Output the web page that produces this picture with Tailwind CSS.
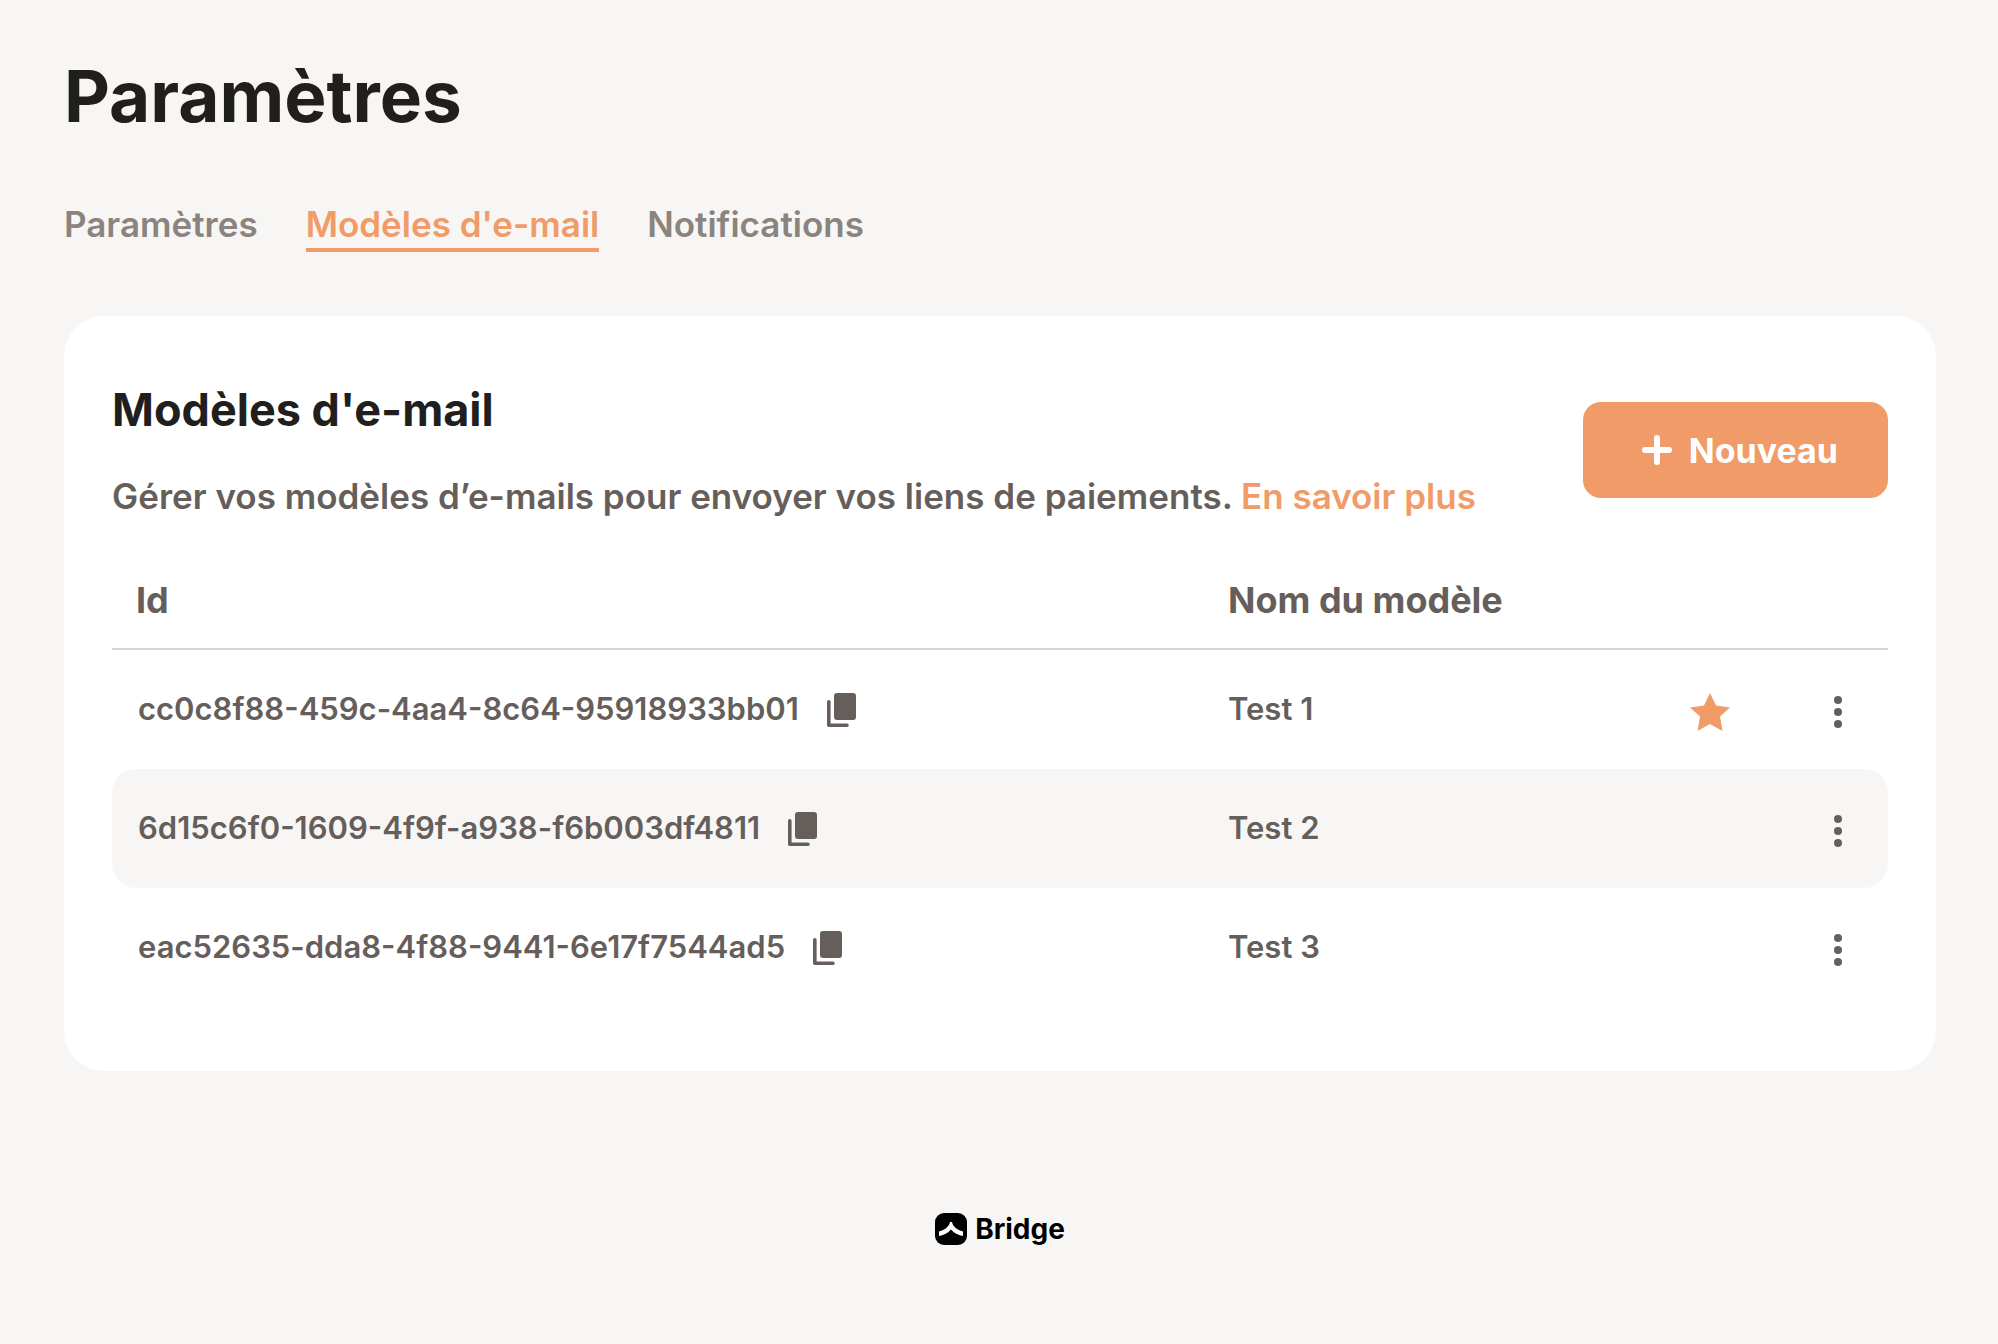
<!DOCTYPE html>
<html lang="fr">
<head>
    <meta charset="UTF-8">
    <meta name="viewport" content="width=device-width, initial-scale=1.0">
    <title>Paramètres - Bridge</title>
    <script src="https://cdn.jsdelivr.net/npm/@tailwindcss/browser@4"></script>
    <style>
        body {
            font-family: 'Inter', sans-serif;
        }
    </style>
</head>
<body class="min-h-screen bg-[#f7f6f5] text-[#665e5b] pl-16 pr-[62px] pt-12 pb-24">
    <!-- Shared icons -->
    <svg class="hidden">
        <symbol id="icon-copy" viewBox="0 0 29 34">
            <rect x="7" y="0" width="22" height="27" rx="3" fill="currentColor" />
            <path d="M1.800 8.800V32.200H20" fill="none" stroke="currentColor" stroke-width="3.600" stroke-linecap="round" stroke-linejoin="round" />
        </symbol>
        <symbol id="icon-more" viewBox="0 0 8 32">
            <circle cx="4" cy="4" r="4" fill="currentColor" />
            <circle cx="4" cy="16" r="4" fill="currentColor" />
            <circle cx="4" cy="28" r="4" fill="currentColor" />
        </symbol>
    </svg>

    <header>
        <h1 class="text-[71px] leading-24 font-bold text-[#211f1d]">Paramètres</h1>
        <nav class="mt-14 flex gap-12 text-[35px] leading-12 font-semibold text-[#8b837d]">
            <a href="#" class="border-b-4 border-transparent">Paramètres</a>
            <a href="#" class="border-b-4 border-[#f09b68] text-[#f09b68]" aria-current="page">Modèles d'e-mail</a>
            <a href="#" class="border-b-4 border-transparent">Notifications</a>
        </nav>
    </header>

    <main class="mt-16 rounded-[40px] bg-white px-12 py-16">
        <div class="flex items-center justify-between">
            <div>
                <h2 class="text-[45px] leading-[60px] font-bold text-[#211f1d]">Modèles d'e-mail</h2>
                <p class="mt-8 text-[35px] leading-12 font-semibold">Gérer vos modèles d’e-mails pour envoyer vos liens de paiements. <a href="#" class="text-[#f09b68]">En savoir plus</a></p>
            </div>
            <button type="button" class="flex h-24 items-center gap-4 rounded-[18px] bg-[#f09b68] pr-[50px] pl-[58px] text-[34px] font-bold text-white">
                <svg class="size-8" viewBox="0 0 32 32" fill="none" stroke="currentColor" stroke-width="6" stroke-linecap="round">
                    <path d="M16 4v24M4 16h24" />
                </svg>
                Nouveau
            </button>
        </div>

        <table class="mt-8 w-full table-fixed border-separate border-spacing-0 text-left text-[31px] font-semibold">
            <thead>
                <tr class="h-[98px] text-[36px]">
                    <th scope="col" class="border-b-2 border-[#d9d5d1] px-6 font-bold">Id</th>
                    <th scope="col" class="w-[430px] border-b-2 border-[#d9d5d1] px-6 font-bold">Nom du modèle</th>
                    <td class="w-[152px] border-b-2 border-[#d9d5d1]"></td>
                    <td class="w-[102px] border-b-2 border-[#d9d5d1]"></td>
                </tr>
            </thead>
            <tbody>
                <tr class="h-[119px]">
                    <td class="px-[26px]">
                        <div class="flex items-center gap-7">
                            cc0c8f88-459c-4aa4-8c64-95918933bb01
                            <button type="button" aria-label="Copier l'id"><svg class="h-[34px] w-[29px]"><use href="#icon-copy" /></svg></button>
                        </div>
                    </td>
                    <td class="px-6">Test 1</td>
                    <td class="pt-1">
                        <svg class="mx-auto size-10 text-[#f09b68]" viewBox="0 0 40 40" fill="currentColor" role="img" aria-label="Modèle par défaut">
                            <path d="M20 1l6 12.500L40 15.500l-10 9L32.500 39 20 32 7.500 39 10 24.500l-10-9L14 13.500z" />
                        </svg>
                    </td>
                    <td class="pt-1 pl-12"><button type="button" aria-label="Plus d'actions" class="block"><svg class="h-8 w-2"><use href="#icon-more" /></svg></button></td>
                </tr>
                <tr class="h-[119px]">
                    <td class="rounded-l-3xl bg-[#f7f6f5] px-[26px]">
                        <div class="flex items-center gap-7">
                            6d15c6f0-1609-4f9f-a938-f6b003df4811
                            <button type="button" aria-label="Copier l'id"><svg class="h-[34px] w-[29px]"><use href="#icon-copy" /></svg></button>
                        </div>
                    </td>
                    <td class="bg-[#f7f6f5] px-6">Test 2</td>
                    <td class="bg-[#f7f6f5]"></td>
                    <td class="rounded-r-3xl bg-[#f7f6f5] pt-1 pl-12"><button type="button" aria-label="Plus d'actions" class="block"><svg class="h-8 w-2"><use href="#icon-more" /></svg></button></td>
                </tr>
                <tr class="h-[119px]">
                    <td class="px-[26px]">
                        <div class="flex items-center gap-7">
                            eac52635-dda8-4f88-9441-6e17f7544ad5
                            <button type="button" aria-label="Copier l'id"><svg class="h-[34px] w-[29px]"><use href="#icon-copy" /></svg></button>
                        </div>
                    </td>
                    <td class="px-6">Test 3</td>
                    <td></td>
                    <td class="pt-1 pl-12"><button type="button" aria-label="Plus d'actions" class="block"><svg class="h-8 w-2"><use href="#icon-more" /></svg></button></td>
                </tr>
            </tbody>
        </table>
    </main>

    <footer class="mt-[142px] flex items-center justify-center gap-2 text-[28px] leading-8 font-bold text-black">
        <svg class="size-8" viewBox="0 0 32 32">
            <rect width="32" height="32" rx="9" fill="#000" />
            <path d="M15 9h2c1 4.500 5 8 11 9.500V23c-4-.500-8.500-2.500-12-6.500C12.500 20.500 8 22.500 4 23v-4.500C10 17 14 13.500 15 9z" fill="#fff" />
        </svg>
        Bridge
    </footer>
</body>
</html>
